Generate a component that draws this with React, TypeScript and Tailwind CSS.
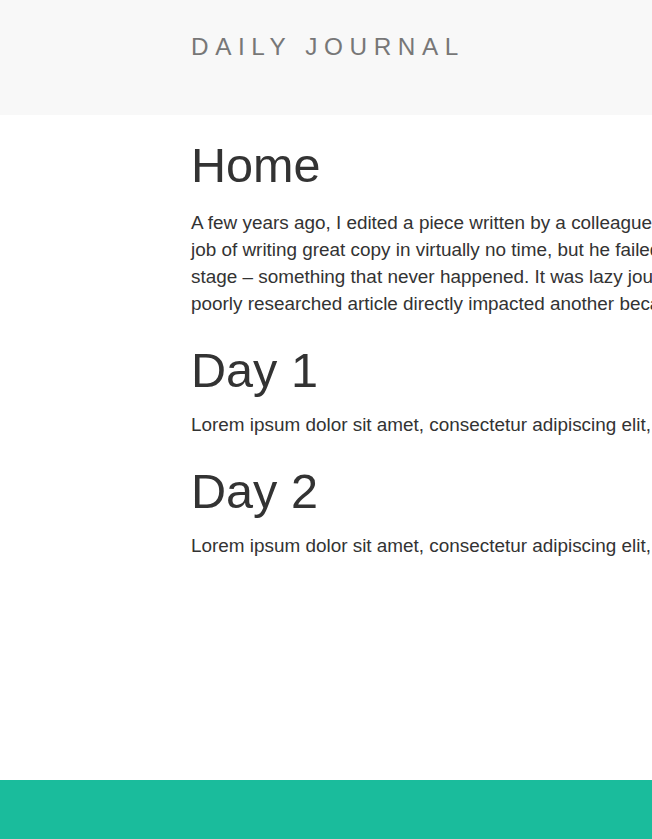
import React from "react";

const homeLines = [
  "A few years ago, I edited a piece written by a colleague who had done a fantastic",
  "job of writing great copy in virtually no time, but he failed to check the facts at any",
  "stage – something that never happened. It was lazy journalism, and the fallout of a",
  "poorly researched article directly impacted another because of what it claimed.",
];

const lorem =
  "Lorem ipsum dolor sit amet, consectetur adipiscing elit, sed do eiusmod tempor incididunt ut labore et dolore magna aliqua.";

const posts = [
  { title: "Day 1", body: lorem },
  { title: "Day 2", body: lorem },
];

export default function App() {
  return (
    <div className="min-h-screen w-full flex flex-col overflow-hidden bg-white text-[#333] font-['Liberation_Sans',Arial,sans-serif]">
      {/* Navbar */}
      <header className="h-[115px] w-full bg-[#f8f8f8] shrink-0">
        <div className="pl-[191px] pt-[30px]">
          <span className="block whitespace-nowrap text-[24.3px] leading-[33px] tracking-[6.6px] text-[#777]">
            DAILY JOURNAL
          </span>
        </div>
      </header>

      {/* Content */}
      <main className="flex-1 pl-[191px] w-[1200px]">
        <h1 className="mt-[24px] mb-[16px] text-[48.6px] leading-[53.5px] font-normal">Home</h1>
        <p className="text-[18.9px] leading-[27px]">
          {homeLines.map((line) => (
            <span key={line} className="block whitespace-nowrap">
              {line}
            </span>
          ))}
        </p>

        {posts.map((post) => (
          <section key={post.title}>
            <h1 className="mt-[27px] mb-[13.5px] text-[48.6px] leading-[53.5px] font-normal">{post.title}</h1>
            <p className="text-[18.9px] leading-[27px] whitespace-nowrap">{post.body}</p>
          </section>
        ))}
      </main>

      {/* Footer */}
      <footer className="h-[59px] w-full bg-[#1abc9c] shrink-0"></footer>
    </div>
  );
}
